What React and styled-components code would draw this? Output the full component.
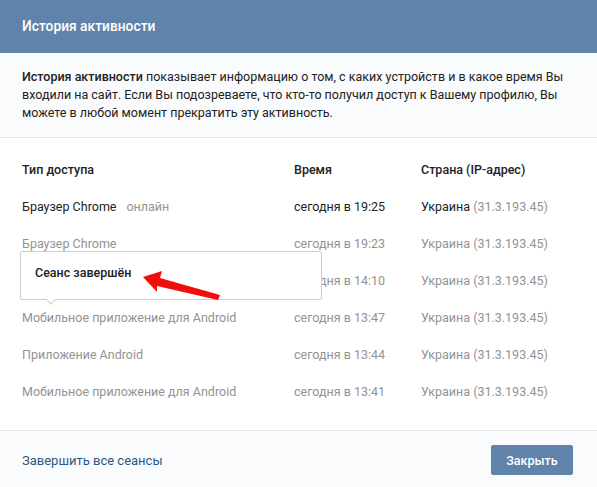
import React from 'react'
import styled, { createGlobalStyle } from 'styled-components'

const GlobalStyle = createGlobalStyle`
  html, body {
    margin: 0;
    padding: 0;
    background: #fff;
  }
  body {
    font-family: Roboto, "Liberation Sans", sans-serif;
    font-size: 12.5px;
    color: #222;
  }
`

const Dialog = styled.div`
  position: relative;
  width: 597px;
  height: 487px;
  display: flex;
  flex-direction: column;
  overflow: hidden;
`

const Header = styled.div`
  height: 53px;
  flex: none;
  background: #5f83aa;
  color: #fff;
  font-weight: 500;
  font-size: 13.8px;
  line-height: 52px;
  padding: 0 22px;
`

const Intro = styled.div`
  height: 85px;
  flex: none;
  box-sizing: border-box;
  padding: 15px 22px 0;
  background: #fafbfc;
  border-bottom: 1px solid #e7e8ec;
  line-height: 18px;
  color: #222;

  b {
    font-weight: 500;
  }
`

const Table = styled.div`
  flex: 1;
  padding: 13px 22px 0;
`

const Row = styled.div`
  display: grid;
  grid-template-columns: 272px 127px 1fr;
  height: 37px;
  align-items: center;
  color: ${({ $dim }) => ($dim ? '#939393' : '#222')};
  font-weight: ${({ $head }) => ($head ? 500 : 400)};
`

const Online = styled.span`
  color: #939393;
  margin-left: 10px;
`

const Muted = styled.span`
  color: #939393;
`

const Footer = styled.div`
  height: 57px;
  flex: none;
  box-sizing: border-box;
  display: flex;
  align-items: center;
  justify-content: space-between;
  padding: 2px 24px 0 22px;
  background: #fafbfc;
  border-top: 1px solid #e7e8ec;
`

const EndAll = styled.a`
  color: #2a5885;
  font-size: 13px;
  cursor: pointer;
`

const CloseButton = styled.button`
  width: 82px;
  height: 30px;
  border: 0;
  border-radius: 2px;
  background: #5f83aa;
  color: #fff;
  font: 500 12.5px Roboto, "Liberation Sans", sans-serif;
`

const Tooltip = styled.div`
  position: absolute;
  left: 20px;
  top: 251px;
  width: 302px;
  height: 49px;
  box-sizing: border-box;
  padding: 12px 14px 0;
  background: #fff;
  border: 1px solid #c5d0db;
  border-radius: 2px;
  font-weight: 500;
  line-height: 18px;
  color: #222;

  &::after {
    content: '';
    position: absolute;
    left: 26px;
    bottom: -4px;
    width: 7px;
    height: 7px;
    background: #fff;
    border-right: 1px solid #c5d0db;
    border-bottom: 1px solid #c5d0db;
    transform: rotate(45deg);
  }
`

const Arrow = styled.svg`
  position: absolute;
  left: 140px;
  top: 268px;
  width: 84px;
  height: 34px;
`

const rows = [
  { name: 'Браузер Chrome', online: true, time: 'сегодня в 19:25' },
  { name: 'Браузер Chrome', dim: true, time: 'сегодня в 19:23' },
  { name: '', dim: true, time: 'сегодня в 14:10' },
  { name: 'Мобильное приложение для Android', dim: true, time: 'сегодня в 13:47' },
  { name: 'Приложение Android', dim: true, time: 'сегодня в 13:44' },
  { name: 'Мобильное приложение для Android', dim: true, time: 'сегодня в 13:41' },
]

const App = () => {
  return (
    <Dialog>
      <GlobalStyle />
      <Header>История активности</Header>
      <Intro>
        <b>История активности</b> показывает информацию о том, с каких устройств и в какое время Вы
        <br />
        входили на сайт. Если Вы подозреваете, что кто-то получил доступ к Вашему профилю, Вы
        <br />
        можете в любой момент прекратить эту активность.
      </Intro>
      <Table>
        <Row $head>
          <span>Тип доступа</span>
          <span>Время</span>
          <span>Страна (IP-адрес)</span>
        </Row>
        {rows.map((row, i) => (
          <Row key={i} $dim={row.dim}>
            <span>
              {row.name}
              {row.online && <Online>онлайн</Online>}
            </span>
            <span>{row.time}</span>
            <span>
              Украина <Muted>(31.3.193.45)</Muted>
            </span>
          </Row>
        ))}
      </Table>
      <Footer>
        <EndAll>Завершить все сеансы</EndAll>
        <CloseButton>Закрыть</CloseButton>
      </Footer>
      <Tooltip>Сеанс завершён</Tooltip>
      <Arrow viewBox="0 0 84 34">
        <path d="M3 9 L22 3 L20 10 L80 27 L78 32 L17 18 L17 24 Z" fill="#f20d0d" />
      </Arrow>
    </Dialog>
  )
}

export default App
